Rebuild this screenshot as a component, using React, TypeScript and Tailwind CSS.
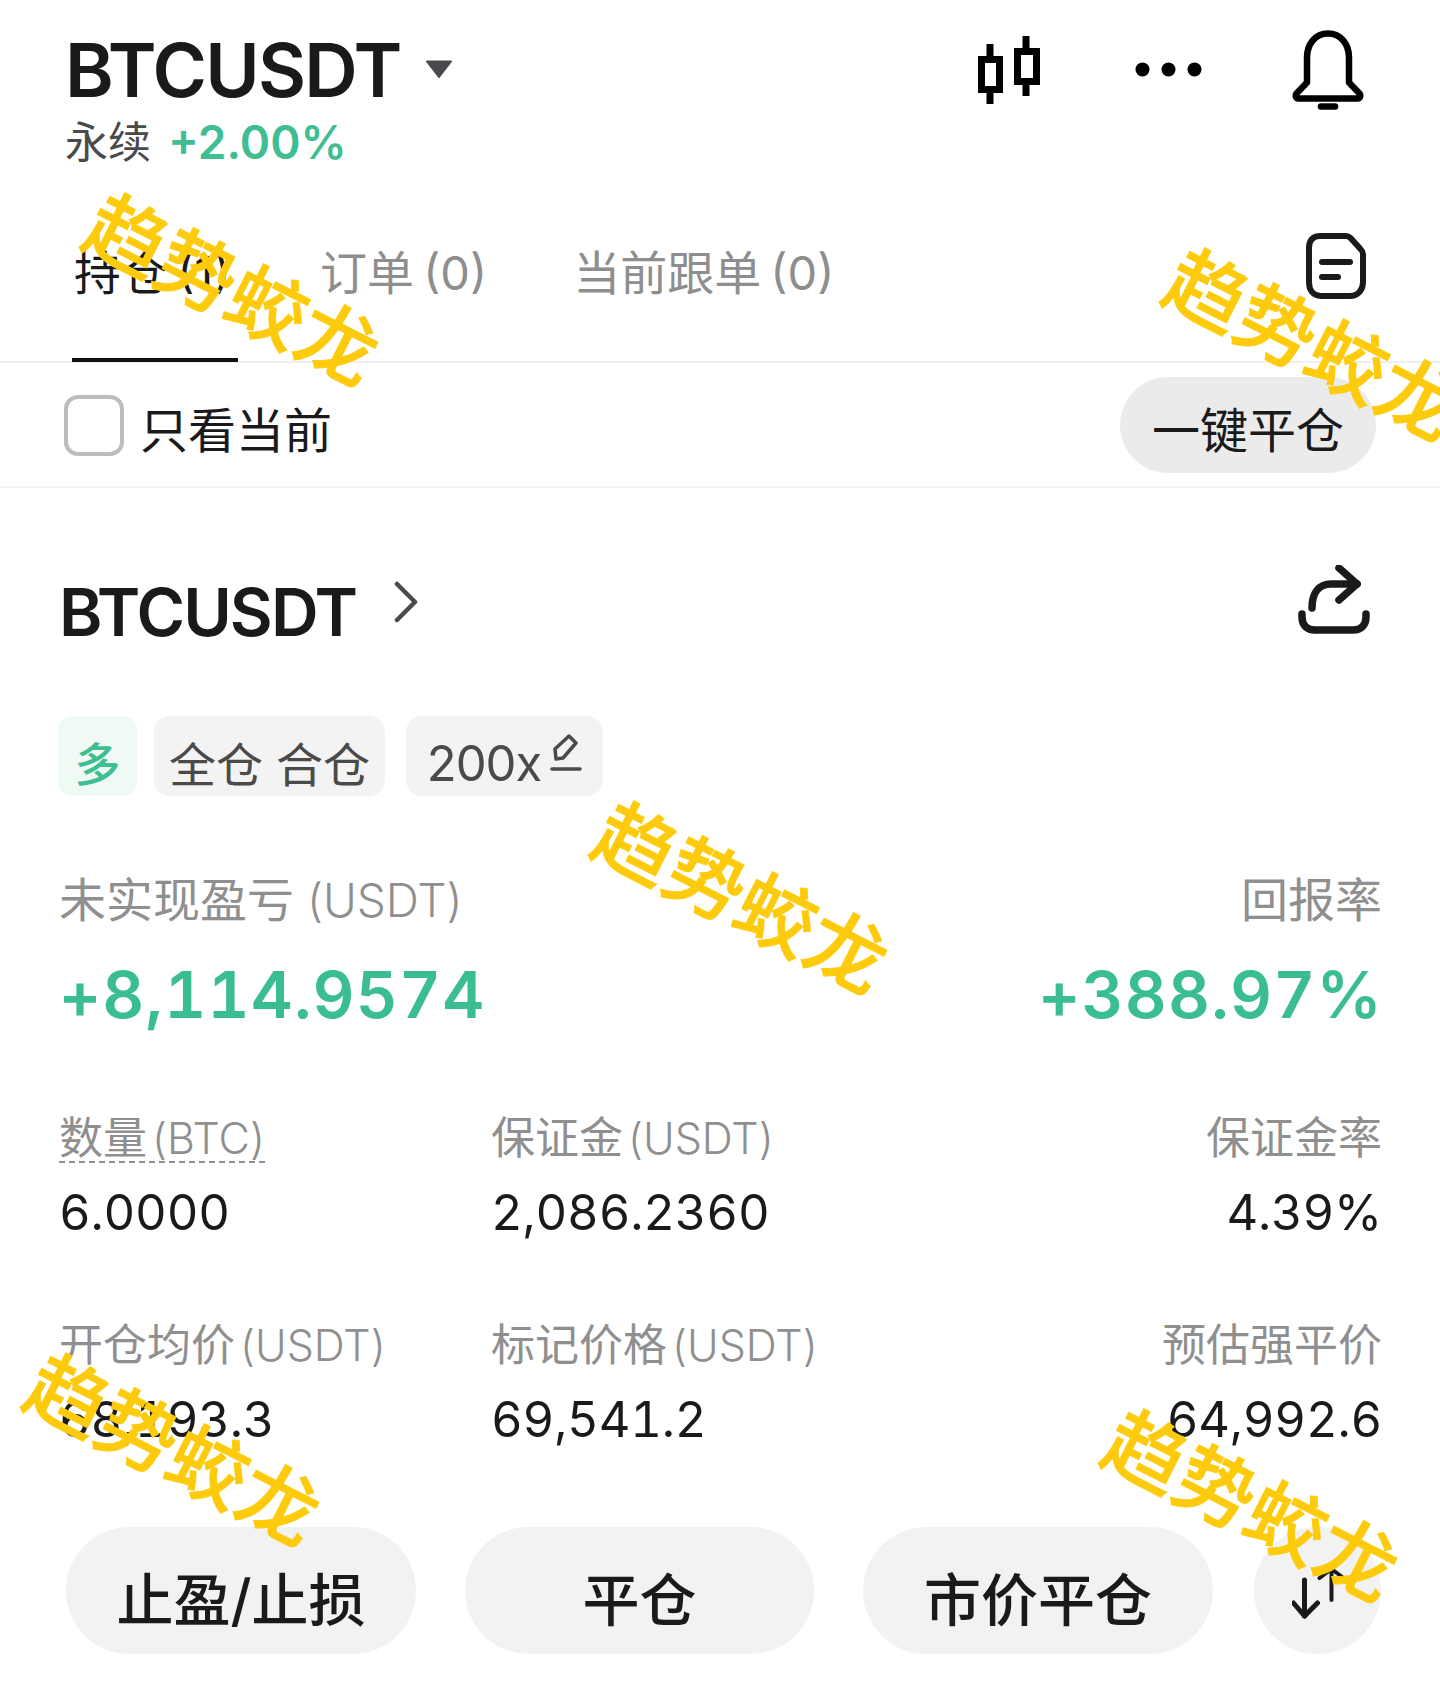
import React from "react";

function Watermark({ className }: { className: string }) {
  return (
    <div className={"absolute -translate-x-1/2 -translate-y-1/2 rotate-[27deg] whitespace-nowrap text-[79px] leading-none font-medium text-[#fdcb0c] [-webkit-text-stroke:0.8px_#fdcb0c] " + className}>
      趋势蛟龙
    </div>
  );
}

function Label({ children, latin, right }: { children: React.ReactNode; latin?: string; right?: boolean }) {
  return (
    <div className={"text-[44px] leading-[50px] [word-spacing:-7px] whitespace-nowrap text-[#8f8f8f] " + (right ? "text-right" : "")}>
      {children}
      {latin ? <span className="text-[43px] font-light"> {latin}</span> : null}
    </div>
  );
}

function Value({ children, right }: { children: React.ReactNode; right?: boolean }) {
  return <div className={"mt-[25px] text-[49px] leading-[50px] tracking-[-0.2px] tabular-nums text-[#1a1a1a] " + (right ? "text-right" : "")}>{children}</div>;
}

function Btn({ children, className }: { children: React.ReactNode; className: string }) {
  return (
    <div className={"flex h-[127px] items-center justify-center rounded-[64px] bg-[#f2f2f2] pt-[20px] text-[57px] leading-none font-medium text-[#1a1a1a] " + className}>
      {children}
    </div>
  );
}

export default function App() {
  return (
    <div
      className="relative h-[1702px] w-[1440px] overflow-hidden bg-white text-[#1a1a1a]"
      style={{ fontFamily: 'Inter, "Noto Sans CJK SC", sans-serif' }}
    >
      {/* Header */}
      <div className="flex h-[177px] items-start pr-[76px] pl-[65px]">
        <div>
          <div className="mt-[30px] flex items-center">
            <span className="text-[74px] leading-[80px] font-semibold tracking-[-1.8px]">BTCUSDT</span>
            <svg className="mt-[-2px] ml-[24px]" width="28" height="18" viewBox="0 0 28 18">
              <path d="M2 1.5h24L14 17z" fill="#4a4a4e" stroke="#4a4a4e" strokeWidth="2" strokeLinejoin="round" />
            </svg>
          </div>
          <div className="mt-[7px] flex items-center">
            <span className="text-[43px] leading-[50px] text-[#4a4a4a]">永续</span>
            <span className="ml-[17px] text-[46px] leading-[50px] font-semibold text-[#3fbd93]">+2.00%</span>
          </div>
        </div>
        <div className="ml-auto flex items-start">
          <svg className="mt-[36px]" width="62" height="68" viewBox="0 0 62 68" fill="none" stroke="#000" strokeWidth="7">
            <rect x="3.5" y="23.5" width="18" height="30" />
            <path d="M12 8v15M12 54v14" />
            <rect x="39.5" y="15.5" width="19" height="30" />
            <path d="M48 0v15M48 46v14" />
          </svg>
          <svg className="mt-[62px] ml-[95px]" width="67" height="15" viewBox="0 0 67 15" fill="#000">
            <circle cx="7.5" cy="7.5" r="7" />
            <circle cx="33.5" cy="7.5" r="7" />
            <circle cx="59.5" cy="7.5" r="7" />
          </svg>
          <svg className="mt-[30px] ml-[90px]" width="72" height="80" viewBox="0 0 72 80" fill="none" stroke="#000" strokeWidth="6.5" strokeLinecap="round" strokeLinejoin="round">
            <path d="M36 3.5c-13 0-21 11-21 24v25L4.5 63.5c-1.5 2-.5 5 2 5h59c2.5 0 3.500-3 2-5L57 52.500v-25c0-13-8-24-21-24z" />
            <path d="M29 76.500h14" />
          </svg>
        </div>
      </div>

      {/* Tabs */}
      <div className="flex h-[186px] items-start border-b-2 border-[#efefef] pr-[74px] pl-[72px] text-[47px] leading-[50px] [word-spacing:-4px]">
        <div className="flex h-[185px] w-[166px] flex-col border-b-[4px] border-[#111]">
          <span className="mt-[71px] pl-[2px] whitespace-nowrap">持仓 (1)</span>
        </div>
        <span className="mt-[71px] ml-[82px] whitespace-nowrap text-[#8e8e8e]">订单 (0)</span>
        <span className="mt-[71px] ml-[86px] whitespace-nowrap text-[#8e8e8e]">当前跟单 (0)</span>
        <svg className="mt-[56px] ml-auto" width="60" height="66" viewBox="0 0 60 66" fill="none" stroke="#1a1a1a" strokeWidth="6" strokeLinejoin="round" strokeLinecap="round">
          <path d="M14 3h26c2 0 3 .6 4.500 2l10 11c1.500 1.500 2.500 3 2.500 5v28c0 8-5 14-13 14H15C7 63 3 57 3 49V15C3 7 7 3 14 3z" />
          <path d="M16 29h28" />
          <path d="M16 44h16" />
        </svg>
      </div>

      {/* Filter row */}
      <div className="flex h-[125px] items-center border-b-2 border-[#f4f4f4] pr-[64px] pl-[64px]">
        <div className="mt-[1px] h-[61px] w-[60px] rounded-[14px] border-[4px] border-[#bdbdbd]" />
        <span className="mt-[13px] ml-[16px] text-[48px] leading-[50px] text-[#1a1a1a]">只看当前</span>
        <div className="ml-auto flex h-[96px] w-[256px] items-center justify-center rounded-[48px] bg-[#ebebeb] pt-[13px] text-[48px] leading-none">
          一键平仓
        </div>
      </div>

      {/* Position title */}
      <div className="mt-[60px] flex h-[130px] items-center pr-[70px] pl-[59px]">
        <span className="mt-[-2px] text-[66px] leading-[70px] font-semibold tracking-[-1.9px]">BTCUSDT</span>
        <svg className="mt-[-22px] ml-[37px]" width="26" height="42" viewBox="0 0 26 42" fill="none" stroke="#4a4a4a" strokeWidth="4.500" strokeLinecap="round" strokeLinejoin="round">
          <path d="M4 3l18 18L4 39" />
        </svg>
        <svg className="mt-[-26px] ml-auto" width="72" height="70" viewBox="0 0 72 70" fill="none" stroke="#1a1a1a" strokeWidth="7.500" strokeLinecap="round" strokeLinejoin="round">
          <path d="M14 43c0-15 7-24 19-24h26" />
          <path d="M41 3l18 16-18 16" />
          <path d="M4 49v3c0 8 5 13 13 13h38c8 0 13-5 13-13v-3" />
        </svg>
      </div>

      {/* Tags */}
      <div className="mt-[38px] flex h-[80px] pl-[58px]">
        <div className="flex w-[79px] items-center justify-center rounded-[14px] bg-[#effaf5] pt-[16px] text-[46px] leading-none font-medium text-[#3fbd93]">多</div>
        <div className="ml-[17px] flex w-[231px] items-center justify-center rounded-[16px] bg-[#f3f3f3] pt-[16px] text-[47px] leading-none whitespace-nowrap text-[#4a4a4a]">全仓 合仓</div>
        <div className="ml-[21px] flex w-[197px] items-center justify-center rounded-[16px] bg-[#f3f3f3] text-[49px] leading-none tracking-[-1px] text-[#4a4a4a]">
          <span className="mt-[14px]">200x</span>
          <svg className="mt-[-6px] ml-[9px]" width="32" height="38" viewBox="0 0 32 38" fill="none" stroke="#4a4a4a" strokeWidth="3.500" strokeLinejoin="round" strokeLinecap="round">
            <path d="M6 25L5 15 19 2l7 7-13 15z" />
            <path d="M2 35h28" />
          </svg>
        </div>
      </div>

      {/* PnL */}
      <div className="mt-[79px] flex justify-between pr-[58px] pl-[59px]">
        <div>
          <div className="text-[47px] leading-[50px] whitespace-nowrap text-[#8f8f8f]">
            未实现盈亏<span className="text-[46px] font-light"> (USDT)</span>
          </div>
          <div className="mt-[35px] text-[65px] leading-[70px] font-semibold tracking-[1.2px] tabular-nums text-[#3abd91]">+8,114.9574</div>
        </div>
        <div className="text-right">
          <div className="text-[47px] leading-[50px] text-[#8f8f8f]">回报率</div>
          <div className="mt-[35px] mr-[-1px] text-[65px] leading-[70px] font-semibold tracking-[1.2px] tabular-nums text-[#3abd91]">+388.97%</div>
        </div>
      </div>

      {/* Stats */}
      <div className="mt-[83px] grid grid-cols-[432px_1fr_auto] gap-y-[82px] pr-[58px] pl-[59px]">
        <div>
          <div className="w-fit border-b-2 border-dashed border-[#8f8f8f]">
            <div className="mb-[-2px]">
              <Label latin="(BTC)">数量</Label>
            </div>
          </div>
          <Value>6.0000</Value>
        </div>
        <div>
          <Label latin="(USDT)">保证金</Label>
          <Value>2,086.2360</Value>
        </div>
        <div>
          <Label right>保证金率</Label>
          <Value right>4.39%</Value>
        </div>
        <div>
          <Label latin="(USDT)">开仓均价</Label>
          <Value>68,193.3</Value>
        </div>
        <div>
          <Label latin="(USDT)">标记价格</Label>
          <Value>69,541.2</Value>
        </div>
        <div>
          <Label right>预估强平价</Label>
          <Value right>64,992.6</Value>
        </div>
      </div>

      {/* Actions */}
      <div className="mt-[82px] flex pr-[59px] pl-[66px]">
        <Btn className="w-[350px]">止盈/止损</Btn>
        <Btn className="ml-[49px] w-[349px]">平仓</Btn>
        <Btn className="ml-[49px] w-[350px]">市价平仓</Btn>
        <div className="ml-[41px] flex h-[127px] w-[127px] items-center justify-center rounded-full bg-[#f2f2f2]">
          <svg width="52" height="60" viewBox="0 0 52 60" fill="none" stroke="#1a1a1a" strokeLinecap="round" strokeLinejoin="round">
            <path d="M12.500 19v36" strokeWidth="5" />
            <path d="M1.500 42l11 13 13-13" strokeWidth="5" />
            <path d="M39.500 8v31" strokeWidth="4" />
            <path d="M27.500 17l12-9 12 9" strokeWidth="4" />
          </svg>
        </div>
      </div>

      {/* Watermarks */}
      <Watermark className="left-[232px] top-[290px]" />
      <Watermark className="left-[1312px] top-[345px]" />
      <Watermark className="left-[741px] top-[898px]" />
      <Watermark className="left-[173px] top-[1450px]" />
      <Watermark className="left-[1251px] top-[1506px]" />
    </div>
  );
}
